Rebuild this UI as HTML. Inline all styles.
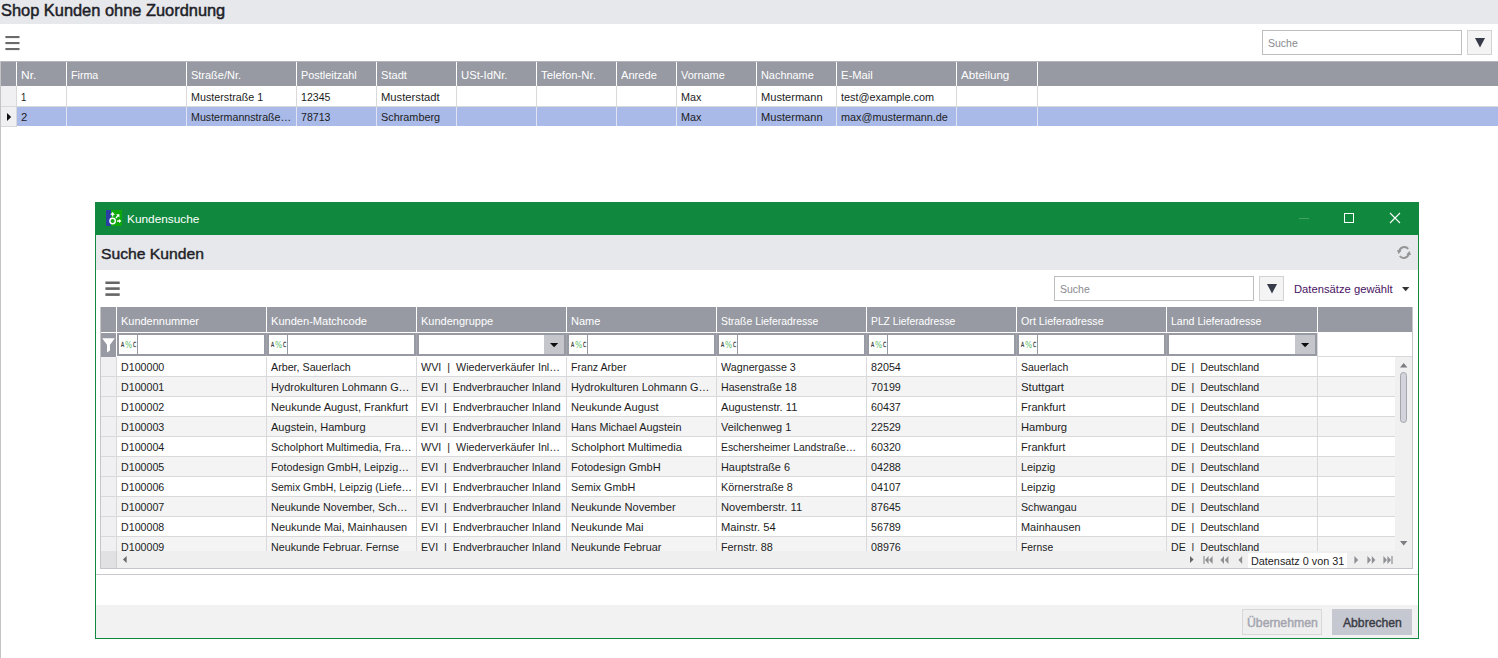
<!DOCTYPE html>
<html lang="de"><head><meta charset="utf-8"><title>Shop Kunden ohne Zuordnung</title>
<style>
html,body{margin:0;padding:0;background:#fff;}
body{width:1498px;height:658px;position:relative;overflow:hidden;font-family:"Liberation Sans", Arial, sans-serif;}
body div,body svg,body span{position:absolute;}
.t{white-space:pre;transform-origin:0 0;}
.clip{overflow:hidden;}
.mono{font-family:"DejaVu Sans",sans-serif;font-size:7px;line-height:12px;font-weight:400;color:#2a2a2a;transform-origin:0 0;transform:scaleX(.66);-webkit-text-stroke:.2px #2a2a2a;}
.pct{font-family:"DejaVu Sans",sans-serif;font-size:9px;line-height:12px;font-weight:400;color:#5cbc66;transform-origin:0 0;transform:scaleX(.84);}
</style></head><body>
<div style="left:0px;top:0px;width:1498px;height:24px;background:#e7e8ec;"></div>
<svg style="left:0;top:30px" width="30" height="26" viewBox="0 0 30 26" fill="#6a6a6a"><rect x="5.4" y="6" width="14.1" height="2.1"/><rect x="5.4" y="12" width="14.1" height="2.1"/><rect x="5.4" y="18" width="14.1" height="2.1"/></svg>
<div style="left:1262px;top:30px;width:200px;height:25px;background:#fff;border:1px solid #bdbdbd;box-sizing:border-box;"></div>
<div style="left:1467px;top:30px;width:25px;height:25px;background:#f4f4f5;border:1px solid #d2d2d4;box-sizing:border-box;"></div>
<svg style="left:1475px;top:38px" width="10" height="10" viewBox="0 0 10 10"><path d="M0 0H10L5 9.4Z" fill="#373a48"/></svg>
<div style="left:0px;top:61px;width:1px;height:597px;background:#c4c4c6;"></div>
<div style="left:1px;top:61px;width:1497px;height:25px;background:#979aa3;"></div>
<div style="left:1px;top:61px;width:1497px;height:1px;background:#b4b6bc;"></div>
<div style="left:16px;top:62px;width:1px;height:24px;background:#fff;"></div>
<div style="left:66px;top:62px;width:1px;height:24px;background:#fff;"></div>
<div style="left:186px;top:62px;width:1px;height:24px;background:#fff;"></div>
<div style="left:296px;top:62px;width:1px;height:24px;background:#fff;"></div>
<div style="left:376px;top:62px;width:1px;height:24px;background:#fff;"></div>
<div style="left:456px;top:62px;width:1px;height:24px;background:#fff;"></div>
<div style="left:536px;top:62px;width:1px;height:24px;background:#fff;"></div>
<div style="left:616px;top:62px;width:1px;height:24px;background:#fff;"></div>
<div style="left:676px;top:62px;width:1px;height:24px;background:#fff;"></div>
<div style="left:756px;top:62px;width:1px;height:24px;background:#fff;"></div>
<div style="left:836px;top:62px;width:1px;height:24px;background:#fff;"></div>
<div style="left:956px;top:62px;width:1px;height:24px;background:#fff;"></div>
<div style="left:1037px;top:62px;width:1px;height:24px;background:#fff;"></div>
<div style="left:1px;top:86px;width:15px;height:20px;background:#f0f0f2;"></div>
<div style="left:1px;top:106px;width:1497px;height:1px;background:#d9d9dc;"></div>
<div style="left:17px;top:107px;width:1481px;height:19px;background:#a9baE8;"></div>
<div style="left:1px;top:107px;width:15px;height:19px;background:#f0f0f2;"></div>
<div style="left:1px;top:126px;width:16px;height:1px;background:#d9d9dc;"></div>
<div style="left:16px;top:86px;width:1px;height:21px;background:#d9d9dc;"></div>
<div style="left:16px;top:107px;width:1px;height:19px;background:#d9d9dc;"></div>
<div style="left:66px;top:86px;width:1px;height:21px;background:#d9d9dc;"></div>
<div style="left:66px;top:107px;width:1px;height:19px;background:#dfe3f2;"></div>
<div style="left:186px;top:86px;width:1px;height:21px;background:#d9d9dc;"></div>
<div style="left:186px;top:107px;width:1px;height:19px;background:#dfe3f2;"></div>
<div style="left:296px;top:86px;width:1px;height:21px;background:#d9d9dc;"></div>
<div style="left:296px;top:107px;width:1px;height:19px;background:#dfe3f2;"></div>
<div style="left:376px;top:86px;width:1px;height:21px;background:#d9d9dc;"></div>
<div style="left:376px;top:107px;width:1px;height:19px;background:#dfe3f2;"></div>
<div style="left:456px;top:86px;width:1px;height:21px;background:#d9d9dc;"></div>
<div style="left:456px;top:107px;width:1px;height:19px;background:#dfe3f2;"></div>
<div style="left:536px;top:86px;width:1px;height:21px;background:#d9d9dc;"></div>
<div style="left:536px;top:107px;width:1px;height:19px;background:#dfe3f2;"></div>
<div style="left:616px;top:86px;width:1px;height:21px;background:#d9d9dc;"></div>
<div style="left:616px;top:107px;width:1px;height:19px;background:#dfe3f2;"></div>
<div style="left:676px;top:86px;width:1px;height:21px;background:#d9d9dc;"></div>
<div style="left:676px;top:107px;width:1px;height:19px;background:#dfe3f2;"></div>
<div style="left:756px;top:86px;width:1px;height:21px;background:#d9d9dc;"></div>
<div style="left:756px;top:107px;width:1px;height:19px;background:#dfe3f2;"></div>
<div style="left:836px;top:86px;width:1px;height:21px;background:#d9d9dc;"></div>
<div style="left:836px;top:107px;width:1px;height:19px;background:#dfe3f2;"></div>
<div style="left:956px;top:86px;width:1px;height:21px;background:#d9d9dc;"></div>
<div style="left:956px;top:107px;width:1px;height:19px;background:#dfe3f2;"></div>
<div style="left:1037px;top:86px;width:1px;height:21px;background:#d9d9dc;"></div>
<div style="left:1037px;top:107px;width:1px;height:19px;background:#dfe3f2;"></div>
<svg style="left:7px;top:113px" width="5" height="8" viewBox="0 0 5 8"><path d="M0 0L4.2 4L0 8Z" fill="#111"/></svg>
<div style="left:95px;top:202px;width:1324px;height:437px;background:#fff;border:1px solid #10893e;box-sizing:border-box;"></div>
<div style="left:95px;top:202px;width:1324px;height:33px;background:#10893e;"></div>
<div style="left:106px;top:210px;width:5px;height:16px;background:#2a3ea6;"></div>
<div style="left:111px;top:210px;width:11px;height:16px;background:#0ca80c;"></div>
<svg style="left:106px;top:210px" width="16" height="16" viewBox="0 0 16 16">
<circle cx="6.6" cy="11" r="2.7" fill="none" stroke="#fff" stroke-width="1.4"/>
<path d="M6.6 1.9L9 4.8H7.3V6.4H5.9V4.8H4.2Z" fill="#fff"/>
<path d="M10.1 4.2H13.4V7.4Z" fill="#fff"/><path d="M9.9 8L12.2 5.4" stroke="#fff" stroke-width="1.3" fill="none"/>
<path d="M11 10.3H13V9L15.4 11L13 13V11.7H11Z" fill="#fff"/></svg>
<div style="left:1299px;top:218px;width:10px;height:1px;background:#43a067;"></div>
<div style="left:1344px;top:213px;width:10px;height:10px;background:transparent;border:1px solid #fff;box-sizing:border-box;"></div>
<svg style="left:1389px;top:212px" width="12" height="12" viewBox="0 0 12 12"><path d="M1 1L11 11M11 1L1 11" stroke="#fff" stroke-width="1.1" fill="none"/></svg>
<div style="left:96px;top:235px;width:1322px;height:35px;background:#e7e8ec;"></div>
<svg style="left:1397px;top:245px" width="15" height="15" viewBox="0 0 15 15" fill="none" stroke="#949494" stroke-width="2">
<path d="M2.3 6.4A5 5 0 0 1 11.2 3.9"/><path d="M11.7 8.5A5 5 0 0 1 2.8 11"/>
<path d="M0 4.9L4.7 5.5L1.5 8.9Z" fill="#949494" stroke="none"/><path d="M14 10L9.3 9.4L12.5 6Z" fill="#949494" stroke="none"/></svg>
<svg style="left:100px;top:276px" width="30" height="26" viewBox="0 0 30 26" fill="#666"><rect x="5.4" y="5.5" width="14.3" height="2.5"/><rect x="5.4" y="11.3" width="14.3" height="2.6"/><rect x="5.4" y="17.3" width="14.3" height="2.6"/></svg>
<div style="left:1054px;top:276px;width:200px;height:25px;background:#fff;border:1px solid #bdbdbd;box-sizing:border-box;"></div>
<div style="left:1259px;top:276px;width:25px;height:25px;background:#f4f4f5;border:1px solid #d2d2d4;box-sizing:border-box;"></div>
<svg style="left:1266.5px;top:284px" width="10" height="10" viewBox="0 0 10 10"><path d="M0 0H10L5 9.4Z" fill="#373a48"/></svg>
<svg style="left:1401.5px;top:286.5px" width="8" height="5" viewBox="0 0 8 5"><path d="M0 0H7.4L3.7 4.2Z" fill="#333"/></svg>
<div style="left:100px;top:307px;width:1313px;height:262px;background:#fff;border:1px solid #c6c6ca;box-sizing:border-box;"></div>
<div style="left:101px;top:307px;width:1311px;height:25px;background:#979aa3;"></div>
<div style="left:116px;top:307px;width:1px;height:25px;background:#fff;"></div>
<div style="left:266px;top:307px;width:1px;height:25px;background:#fff;"></div>
<div style="left:416px;top:307px;width:1px;height:25px;background:#fff;"></div>
<div style="left:566px;top:307px;width:1px;height:25px;background:#fff;"></div>
<div style="left:716px;top:307px;width:1px;height:25px;background:#fff;"></div>
<div style="left:866px;top:307px;width:1px;height:25px;background:#fff;"></div>
<div style="left:1016px;top:307px;width:1px;height:25px;background:#fff;"></div>
<div style="left:1166px;top:307px;width:1px;height:25px;background:#fff;"></div>
<div style="left:1317px;top:307px;width:1px;height:25px;background:#fff;"></div>
<div style="left:101px;top:333px;width:15px;height:24px;background:#979aa3;"></div>
<svg style="left:102px;top:338px" width="13" height="15" viewBox="0 0 13 15"><path d="M0.2 0.3H12.8L8 6.8V12.4L5 14.6V6.8Z" fill="#fff"/></svg>
<div style="left:116px;top:333px;width:1px;height:24px;background:#fff;"></div>
<div style="left:117px;top:333px;width:149px;height:23px;background:#979aa3;"></div>
<div style="left:119px;top:335px;width:18px;height:19px;background:#fff;"></div>
<div style="left:137px;top:335px;width:1px;height:19px;background:#979aa3;"></div>
<div style="left:138px;top:335px;width:126px;height:19px;background:#fff;"></div>
<span class="mono" style="left:121px;top:338.6px;">A</span><span class="pct" style="left:125px;top:338.9px;">%</span><span class="mono" style="left:133px;top:338.6px;">C</span>
<div style="left:266px;top:333px;width:1px;height:23px;background:#a3a5ad;"></div>
<div style="left:267px;top:333px;width:149px;height:23px;background:#979aa3;"></div>
<div style="left:269px;top:335px;width:18px;height:19px;background:#fff;"></div>
<div style="left:287px;top:335px;width:1px;height:19px;background:#979aa3;"></div>
<div style="left:288px;top:335px;width:126px;height:19px;background:#fff;"></div>
<span class="mono" style="left:271px;top:338.6px;">A</span><span class="pct" style="left:275px;top:338.9px;">%</span><span class="mono" style="left:283px;top:338.6px;">C</span>
<div style="left:416px;top:333px;width:1px;height:23px;background:#a3a5ad;"></div>
<div style="left:417px;top:333px;width:149px;height:23px;background:#979aa3;"></div>
<div style="left:419px;top:335px;width:125px;height:19px;background:#fff;"></div>
<div style="left:544px;top:335px;width:20px;height:19px;background:#c5c6cc;"></div>
<svg style="left:550px;top:343px" width="9" height="5" viewBox="0 0 9 5"><path d="M0 0H8.2L4.1 4.2Z" fill="#0c0c0c"/></svg>
<div style="left:566px;top:333px;width:1px;height:23px;background:#a3a5ad;"></div>
<div style="left:567px;top:333px;width:149px;height:23px;background:#979aa3;"></div>
<div style="left:569px;top:335px;width:18px;height:19px;background:#fff;"></div>
<div style="left:587px;top:335px;width:1px;height:19px;background:#979aa3;"></div>
<div style="left:588px;top:335px;width:126px;height:19px;background:#fff;"></div>
<span class="mono" style="left:571px;top:338.6px;">A</span><span class="pct" style="left:575px;top:338.9px;">%</span><span class="mono" style="left:583px;top:338.6px;">C</span>
<div style="left:716px;top:333px;width:1px;height:23px;background:#a3a5ad;"></div>
<div style="left:717px;top:333px;width:149px;height:23px;background:#979aa3;"></div>
<div style="left:719px;top:335px;width:18px;height:19px;background:#fff;"></div>
<div style="left:737px;top:335px;width:1px;height:19px;background:#979aa3;"></div>
<div style="left:738px;top:335px;width:126px;height:19px;background:#fff;"></div>
<span class="mono" style="left:721px;top:338.6px;">A</span><span class="pct" style="left:725px;top:338.9px;">%</span><span class="mono" style="left:733px;top:338.6px;">C</span>
<div style="left:866px;top:333px;width:1px;height:23px;background:#a3a5ad;"></div>
<div style="left:867px;top:333px;width:149px;height:23px;background:#979aa3;"></div>
<div style="left:869px;top:335px;width:18px;height:19px;background:#fff;"></div>
<div style="left:887px;top:335px;width:1px;height:19px;background:#979aa3;"></div>
<div style="left:888px;top:335px;width:126px;height:19px;background:#fff;"></div>
<span class="mono" style="left:871px;top:338.6px;">A</span><span class="pct" style="left:875px;top:338.9px;">%</span><span class="mono" style="left:883px;top:338.6px;">C</span>
<div style="left:1016px;top:333px;width:1px;height:23px;background:#a3a5ad;"></div>
<div style="left:1017px;top:333px;width:149px;height:23px;background:#979aa3;"></div>
<div style="left:1019px;top:335px;width:18px;height:19px;background:#fff;"></div>
<div style="left:1037px;top:335px;width:1px;height:19px;background:#979aa3;"></div>
<div style="left:1038px;top:335px;width:126px;height:19px;background:#fff;"></div>
<span class="mono" style="left:1021px;top:338.6px;">A</span><span class="pct" style="left:1025px;top:338.9px;">%</span><span class="mono" style="left:1033px;top:338.6px;">C</span>
<div style="left:1166px;top:333px;width:1px;height:23px;background:#a3a5ad;"></div>
<div style="left:1167px;top:333px;width:150px;height:23px;background:#979aa3;"></div>
<div style="left:1169px;top:335px;width:126px;height:19px;background:#fff;"></div>
<div style="left:1295px;top:335px;width:20px;height:19px;background:#c5c6cc;"></div>
<svg style="left:1301px;top:343px" width="9" height="5" viewBox="0 0 9 5"><path d="M0 0H8.2L4.1 4.2Z" fill="#0c0c0c"/></svg>
<div style="left:1317px;top:356px;width:95px;height:1px;background:#d9d9dc;"></div>
<div style="left:1317px;top:333px;width:1px;height:23px;background:#d9d9dc;"></div>
<div style="left:1395px;top:357px;width:17px;height:194px;background:#f0f0f1;"></div>
<svg style="left:1400px;top:363px" width="8" height="5" viewBox="0 0 8 5"><path d="M0 4.4H7.4L3.7 0Z" fill="#7d7d80"/></svg>
<svg style="left:1400px;top:541px" width="8" height="5" viewBox="0 0 8 5"><path d="M0 0H7.4L3.7 4.4Z" fill="#7d7d80"/></svg>
<div style="left:1400px;top:372px;width:7px;height:51px;background:#d3d4db;border:1px solid #a4a5ad;box-sizing:border-box;border-radius:3.5px;"></div>
<div style="left:101px;top:551px;width:1311px;height:17px;background:#efeff0;"></div>
<div style="left:101px;top:551px;width:15px;height:17px;background:#e1e1e4;"></div>
<div style="left:116px;top:551px;width:1px;height:17px;background:#d0d0d3;"></div>
<svg style="left:122.9px;top:555.9px" width="4" height="7" viewBox="0 0 4 7"><path d="M3.6 0V7L0 3.5Z" fill="#666"/></svg>
<svg style="left:1190px;top:555.9px" width="4" height="7" viewBox="0 0 4 7"><path d="M0 0V7L3.6 3.5Z" fill="#666"/></svg>
<div style="left:1247.5px;top:552.5px;width:99.5px;height:15px;background:#fff;"></div>
<svg style="left:1203px;top:556px" width="10" height="8" viewBox="0 0 10 8" fill="#8f9094"><rect x="0.4" y="0" width="1.2" height="8"/><path d="M5.6 0V8L2 4ZM9.6 0V8L6 4Z"/></svg>
<svg style="left:1220px;top:556px" width="9" height="8" viewBox="0 0 9 8" fill="#8f9094"><path d="M4 0V8L0.4 4ZM8.4 0V8L4.8 4Z"/></svg>
<svg style="left:1237.5px;top:556px" width="5" height="8" viewBox="0 0 5 8" fill="#8f9094"><path d="M4.2 0V8L0.4 4Z"/></svg>
<svg style="left:1353.5px;top:556px" width="5" height="8" viewBox="0 0 5 8" fill="#8f9094"><path d="M0.4 0V8L4.2 4Z"/></svg>
<svg style="left:1367px;top:556px" width="9" height="8" viewBox="0 0 9 8" fill="#8f9094"><path d="M0.4 0V8L4 4ZM4.8 0V8L8.4 4Z"/></svg>
<svg style="left:1383px;top:556px" width="10" height="8" viewBox="0 0 10 8" fill="#8f9094"><path d="M0.4 0V8L4 4ZM4.4 0V8L8 4Z"/><rect x="8.4" y="0" width="1.2" height="8"/></svg>
<div style="left:96px;top:574px;width:1322px;height:1px;background:#c9cace;"></div>
<div style="left:96px;top:605px;width:1322px;height:33px;background:#f2f2f3;"></div>
<div style="left:1242px;top:609px;width:80px;height:26px;background:#eeeeef;border:1px solid #d8d8da;box-sizing:border-box;"></div>
<div style="left:1332px;top:609px;width:80px;height:26px;background:#c6c8d1;"></div>
<span class="t" style="left:1.40px;top:1.25px;font-size:16.6px;line-height:20px;font-weight:400;color:#1f1f29;transform:scaleX(0.9879);-webkit-text-stroke:0.5px #1f1f29;">Shop Kunden ohne Zuordnung</span>
<span class="t" style="left:1267.80px;top:36.96px;font-size:10.8px;line-height:13px;font-weight:400;color:#8a8a8e;transform:scaleX(0.9703);">Suche</span>
<span class="t" style="left:21.00px;top:68.76px;font-size:10.8px;line-height:13px;font-weight:400;color:#fff;transform:scaleX(1.1090);">Nr.</span>
<span class="t" style="left:71.10px;top:68.76px;font-size:10.8px;line-height:13px;font-weight:400;color:#fff;transform:scaleX(0.9897);">Firma</span>
<span class="t" style="left:190.70px;top:68.76px;font-size:10.8px;line-height:13px;font-weight:400;color:#fff;transform:scaleX(1.0163);">Straße/Nr.</span>
<span class="t" style="left:301.00px;top:68.76px;font-size:10.8px;line-height:13px;font-weight:400;color:#fff;transform:scaleX(1.0089);">Postleitzahl</span>
<span class="t" style="left:380.60px;top:68.76px;font-size:10.8px;line-height:13px;font-weight:400;color:#fff;transform:scaleX(1.0273);">Stadt</span>
<span class="t" style="left:460.80px;top:68.76px;font-size:10.8px;line-height:13px;font-weight:400;color:#fff;transform:scaleX(1.0474);">USt-IdNr.</span>
<span class="t" style="left:540.70px;top:68.76px;font-size:10.8px;line-height:13px;font-weight:400;color:#fff;transform:scaleX(1.0497);">Telefon-Nr.</span>
<span class="t" style="left:620.60px;top:68.76px;font-size:10.8px;line-height:13px;font-weight:400;color:#fff;transform:scaleX(1.0284);">Anrede</span>
<span class="t" style="left:681.10px;top:68.76px;font-size:10.8px;line-height:13px;font-weight:400;color:#fff;transform:scaleX(1.0114);">Vorname</span>
<span class="t" style="left:760.90px;top:68.76px;font-size:10.8px;line-height:13px;font-weight:400;color:#fff;transform:scaleX(1.0094);">Nachname</span>
<span class="t" style="left:841.00px;top:68.76px;font-size:10.8px;line-height:13px;font-weight:400;color:#fff;transform:scaleX(1.0366);">E-Mail</span>
<span class="t" style="left:960.60px;top:68.76px;font-size:10.8px;line-height:13px;font-weight:400;color:#fff;transform:scaleX(1.0729);">Abteilung</span>
<span class="t" style="left:21.40px;top:90.76px;font-size:10.8px;line-height:13px;font-weight:400;color:#1c1c1c;transform:scaleX(0.8833);">1</span>
<span class="t" style="left:191.30px;top:90.76px;font-size:10.8px;line-height:13px;font-weight:400;color:#1c1c1c;transform:scaleX(0.9946);">Musterstraße 1</span>
<span class="t" style="left:301.00px;top:90.76px;font-size:10.8px;line-height:13px;font-weight:400;color:#1c1c1c;transform:scaleX(0.9794);">12345</span>
<span class="t" style="left:380.90px;top:90.76px;font-size:10.8px;line-height:13px;font-weight:400;color:#1c1c1c;transform:scaleX(1.0389);">Musterstadt</span>
<span class="t" style="left:681.10px;top:90.76px;font-size:10.8px;line-height:13px;font-weight:400;color:#1c1c1c;transform:scaleX(1.0001);">Max</span>
<span class="t" style="left:761.30px;top:90.76px;font-size:10.8px;line-height:13px;font-weight:400;color:#1c1c1c;transform:scaleX(1.0267);">Mustermann</span>
<span class="t" style="left:841.00px;top:90.76px;font-size:10.8px;line-height:13px;font-weight:400;color:#1c1c1c;transform:scaleX(1.0057);">test@example.com</span>
<span class="t" style="left:20.80px;top:110.76px;font-size:10.8px;line-height:13px;font-weight:400;color:#1c1c1c;transform:scaleX(1.0500);">2</span>
<span class="t" style="left:191.30px;top:110.76px;font-size:10.8px;line-height:13px;font-weight:400;color:#1c1c1c;transform:scaleX(0.9880);">Mustermannstraße…</span>
<span class="t" style="left:301.00px;top:110.76px;font-size:10.8px;line-height:13px;font-weight:400;color:#1c1c1c;transform:scaleX(0.9794);">78713</span>
<span class="t" style="left:380.90px;top:110.76px;font-size:10.8px;line-height:13px;font-weight:400;color:#1c1c1c;transform:scaleX(1.0050);">Schramberg</span>
<span class="t" style="left:681.10px;top:110.76px;font-size:10.8px;line-height:13px;font-weight:400;color:#1c1c1c;transform:scaleX(1.0001);">Max</span>
<span class="t" style="left:761.30px;top:110.76px;font-size:10.8px;line-height:13px;font-weight:400;color:#1c1c1c;transform:scaleX(1.0267);">Mustermann</span>
<span class="t" style="left:841.00px;top:110.76px;font-size:10.8px;line-height:13px;font-weight:400;color:#1c1c1c;transform:scaleX(1.0050);">max@mustermann.de</span>
<span class="t" style="left:126.90px;top:211.91px;font-size:11.8px;line-height:14px;font-weight:400;color:#fff;transform:scaleX(1.0029);">Kundensuche</span>
<span class="t" style="left:101.20px;top:246.48px;font-size:14.5px;line-height:17px;font-weight:400;color:#1f1f29;transform:scaleX(1.0824);-webkit-text-stroke:0.4px #1f1f29;">Suche Kunden</span>
<span class="t" style="left:1059.80px;top:282.96px;font-size:10.8px;line-height:13px;font-weight:400;color:#8a8a8e;transform:scaleX(0.9703);">Suche</span>
<span class="t" style="left:1294.00px;top:282.76px;font-size:10.8px;line-height:13px;font-weight:400;color:#4a1262;transform:scaleX(1.0408);">Datensätze gewählt</span>
<span class="t" style="left:121.30px;top:314.76px;font-size:10.8px;line-height:13px;font-weight:400;color:#fff;transform:scaleX(1.0152);">Kundennummer</span>
<span class="t" style="left:271.00px;top:314.76px;font-size:10.8px;line-height:13px;font-weight:400;color:#fff;transform:scaleX(1.0253);">Kunden-Matchcode</span>
<span class="t" style="left:421.00px;top:314.76px;font-size:10.8px;line-height:13px;font-weight:400;color:#fff;transform:scaleX(1.0192);">Kundengruppe</span>
<span class="t" style="left:571.20px;top:314.76px;font-size:10.8px;line-height:13px;font-weight:400;color:#fff;transform:scaleX(1.0175);">Name</span>
<span class="t" style="left:720.60px;top:314.76px;font-size:10.8px;line-height:13px;font-weight:400;color:#fff;transform:scaleX(0.9641);">Straße Lieferadresse</span>
<span class="t" style="left:871.10px;top:314.76px;font-size:10.8px;line-height:13px;font-weight:400;color:#fff;transform:scaleX(0.9556);">PLZ Lieferadresse</span>
<span class="t" style="left:1021.00px;top:314.76px;font-size:10.8px;line-height:13px;font-weight:400;color:#fff;transform:scaleX(0.9903);">Ort Lieferadresse</span>
<span class="t" style="left:1171.00px;top:314.76px;font-size:10.8px;line-height:13px;font-weight:400;color:#fff;transform:scaleX(0.9780);">Land Lieferadresse</span>
<span class="t" style="left:1251.00px;top:554.96px;font-size:10.8px;line-height:13px;font-weight:400;color:#1c1c1c;transform:scaleX(1.0029);">Datensatz 0 von 31</span>
<span class="t" style="left:1246.70px;top:616.20px;font-size:12.4px;line-height:15px;font-weight:400;color:#a3a4ad;transform:scaleX(0.9883);-webkit-text-stroke:0.4px #a3a4ad;">Übernehmen</span>
<span class="t" style="left:1342.70px;top:616.20px;font-size:12.4px;line-height:15px;font-weight:400;color:#3a3b44;transform:scaleX(0.9810);-webkit-text-stroke:0.4px #3a3b44;">Abbrechen</span>
<div class="clip" style="left:0;top:357px;width:1498px;height:194px;">
<div style="left:101px;top:0px;width:15px;height:19px;background:#f0f0f2"></div>
<div style="left:101px;top:19px;width:1294px;height:1px;background:#d9d9dc"></div>
<div style="left:117px;top:20px;width:1278px;height:19px;background:#f4f4f5"></div>
<div style="left:101px;top:20px;width:15px;height:19px;background:#f0f0f2"></div>
<div style="left:101px;top:39px;width:1294px;height:1px;background:#d9d9dc"></div>
<div style="left:101px;top:40px;width:15px;height:19px;background:#f0f0f2"></div>
<div style="left:101px;top:59px;width:1294px;height:1px;background:#d9d9dc"></div>
<div style="left:117px;top:60px;width:1278px;height:19px;background:#f4f4f5"></div>
<div style="left:101px;top:60px;width:15px;height:19px;background:#f0f0f2"></div>
<div style="left:101px;top:79px;width:1294px;height:1px;background:#d9d9dc"></div>
<div style="left:101px;top:80px;width:15px;height:19px;background:#f0f0f2"></div>
<div style="left:101px;top:99px;width:1294px;height:1px;background:#d9d9dc"></div>
<div style="left:117px;top:100px;width:1278px;height:19px;background:#f4f4f5"></div>
<div style="left:101px;top:100px;width:15px;height:19px;background:#f0f0f2"></div>
<div style="left:101px;top:119px;width:1294px;height:1px;background:#d9d9dc"></div>
<div style="left:101px;top:120px;width:15px;height:19px;background:#f0f0f2"></div>
<div style="left:101px;top:139px;width:1294px;height:1px;background:#d9d9dc"></div>
<div style="left:117px;top:140px;width:1278px;height:19px;background:#f4f4f5"></div>
<div style="left:101px;top:140px;width:15px;height:19px;background:#f0f0f2"></div>
<div style="left:101px;top:159px;width:1294px;height:1px;background:#d9d9dc"></div>
<div style="left:101px;top:160px;width:15px;height:19px;background:#f0f0f2"></div>
<div style="left:101px;top:179px;width:1294px;height:1px;background:#d9d9dc"></div>
<div style="left:117px;top:180px;width:1278px;height:19px;background:#f4f4f5"></div>
<div style="left:101px;top:180px;width:15px;height:19px;background:#f0f0f2"></div>
<div style="left:101px;top:199px;width:1294px;height:1px;background:#d9d9dc"></div>
<div style="left:116px;top:0;width:1px;height:200px;background:#d9d9dc"></div>
<div style="left:266px;top:0;width:1px;height:200px;background:#d9d9dc"></div>
<div style="left:416px;top:0;width:1px;height:200px;background:#d9d9dc"></div>
<div style="left:566px;top:0;width:1px;height:200px;background:#d9d9dc"></div>
<div style="left:716px;top:0;width:1px;height:200px;background:#d9d9dc"></div>
<div style="left:866px;top:0;width:1px;height:200px;background:#d9d9dc"></div>
<div style="left:1016px;top:0;width:1px;height:200px;background:#d9d9dc"></div>
<div style="left:1166px;top:0;width:1px;height:200px;background:#d9d9dc"></div>
<div style="left:1317px;top:0;width:1px;height:200px;background:#d9d9dc"></div>
<span class="t" style="left:121.30px;top:3.76px;font-size:10.8px;line-height:13px;font-weight:400;color:#1c1c1c;transform:scaleX(0.9881);">D100000</span>
<span class="t" style="left:271.00px;top:3.76px;font-size:10.8px;line-height:13px;font-weight:400;color:#1c1c1c;transform:scaleX(0.9911);">Arber, Sauerlach</span>
<span class="t" style="left:421.00px;top:3.76px;font-size:10.8px;line-height:13px;font-weight:400;color:#1c1c1c;transform:scaleX(0.9957);">WVI  |  Wiederverkäufer Inl…</span>
<span class="t" style="left:571.20px;top:3.76px;font-size:10.8px;line-height:13px;font-weight:400;color:#1c1c1c;transform:scaleX(0.9825);">Franz Arber</span>
<span class="t" style="left:720.60px;top:3.76px;font-size:10.8px;line-height:13px;font-weight:400;color:#1c1c1c;transform:scaleX(0.9945);">Wagnergasse 3</span>
<span class="t" style="left:870.80px;top:3.76px;font-size:10.8px;line-height:13px;font-weight:400;color:#1c1c1c;transform:scaleX(0.9927);">82054</span>
<span class="t" style="left:1021.00px;top:3.76px;font-size:10.8px;line-height:13px;font-weight:400;color:#1c1c1c;transform:scaleX(0.9730);">Sauerlach</span>
<span class="t" style="left:1171.00px;top:3.76px;font-size:10.8px;line-height:13px;font-weight:400;color:#1c1c1c;transform:scaleX(0.9820);">DE  |  Deutschland</span>
<span class="t" style="left:121.30px;top:23.76px;font-size:10.8px;line-height:13px;font-weight:400;color:#1c1c1c;transform:scaleX(0.9881);">D100001</span>
<span class="t" style="left:271.00px;top:23.76px;font-size:10.8px;line-height:13px;font-weight:400;color:#1c1c1c;transform:scaleX(1.0078);">Hydrokulturen Lohmann G…</span>
<span class="t" style="left:421.00px;top:23.76px;font-size:10.8px;line-height:13px;font-weight:400;color:#1c1c1c;transform:scaleX(0.9877);">EVI  |  Endverbraucher Inland</span>
<span class="t" style="left:571.20px;top:23.76px;font-size:10.8px;line-height:13px;font-weight:400;color:#1c1c1c;transform:scaleX(1.0064);">Hydrokulturen Lohmann G…</span>
<span class="t" style="left:720.60px;top:23.76px;font-size:10.8px;line-height:13px;font-weight:400;color:#1c1c1c;transform:scaleX(0.9855);">Hasenstraße 18</span>
<span class="t" style="left:870.80px;top:23.76px;font-size:10.8px;line-height:13px;font-weight:400;color:#1c1c1c;transform:scaleX(0.9927);">70199</span>
<span class="t" style="left:1021.00px;top:23.76px;font-size:10.8px;line-height:13px;font-weight:400;color:#1c1c1c;transform:scaleX(1.0537);">Stuttgart</span>
<span class="t" style="left:1171.00px;top:23.76px;font-size:10.8px;line-height:13px;font-weight:400;color:#1c1c1c;transform:scaleX(0.9820);">DE  |  Deutschland</span>
<span class="t" style="left:121.30px;top:43.76px;font-size:10.8px;line-height:13px;font-weight:400;color:#1c1c1c;transform:scaleX(0.9881);">D100002</span>
<span class="t" style="left:271.00px;top:43.76px;font-size:10.8px;line-height:13px;font-weight:400;color:#1c1c1c;transform:scaleX(1.0197);">Neukunde August, Frankfurt</span>
<span class="t" style="left:421.00px;top:43.76px;font-size:10.8px;line-height:13px;font-weight:400;color:#1c1c1c;transform:scaleX(0.9877);">EVI  |  Endverbraucher Inland</span>
<span class="t" style="left:571.20px;top:43.76px;font-size:10.8px;line-height:13px;font-weight:400;color:#1c1c1c;transform:scaleX(1.0287);">Neukunde August</span>
<span class="t" style="left:720.60px;top:43.76px;font-size:10.8px;line-height:13px;font-weight:400;color:#1c1c1c;transform:scaleX(1.0280);">Augustenstr. 11</span>
<span class="t" style="left:870.80px;top:43.76px;font-size:10.8px;line-height:13px;font-weight:400;color:#1c1c1c;transform:scaleX(0.9927);">60437</span>
<span class="t" style="left:1021.00px;top:43.76px;font-size:10.8px;line-height:13px;font-weight:400;color:#1c1c1c;transform:scaleX(1.0232);">Frankfurt</span>
<span class="t" style="left:1171.00px;top:43.76px;font-size:10.8px;line-height:13px;font-weight:400;color:#1c1c1c;transform:scaleX(0.9820);">DE  |  Deutschland</span>
<span class="t" style="left:121.30px;top:63.76px;font-size:10.8px;line-height:13px;font-weight:400;color:#1c1c1c;transform:scaleX(0.9881);">D100003</span>
<span class="t" style="left:271.00px;top:63.76px;font-size:10.8px;line-height:13px;font-weight:400;color:#1c1c1c;transform:scaleX(1.0236);">Augstein, Hamburg</span>
<span class="t" style="left:421.00px;top:63.76px;font-size:10.8px;line-height:13px;font-weight:400;color:#1c1c1c;transform:scaleX(0.9877);">EVI  |  Endverbraucher Inland</span>
<span class="t" style="left:571.20px;top:63.76px;font-size:10.8px;line-height:13px;font-weight:400;color:#1c1c1c;transform:scaleX(1.0062);">Hans Michael Augstein</span>
<span class="t" style="left:720.60px;top:63.76px;font-size:10.8px;line-height:13px;font-weight:400;color:#1c1c1c;transform:scaleX(1.0082);">Veilchenweg 1</span>
<span class="t" style="left:870.80px;top:63.76px;font-size:10.8px;line-height:13px;font-weight:400;color:#1c1c1c;transform:scaleX(0.9927);">22529</span>
<span class="t" style="left:1021.00px;top:63.76px;font-size:10.8px;line-height:13px;font-weight:400;color:#1c1c1c;transform:scaleX(1.0383);">Hamburg</span>
<span class="t" style="left:1171.00px;top:63.76px;font-size:10.8px;line-height:13px;font-weight:400;color:#1c1c1c;transform:scaleX(0.9820);">DE  |  Deutschland</span>
<span class="t" style="left:121.30px;top:83.76px;font-size:10.8px;line-height:13px;font-weight:400;color:#1c1c1c;transform:scaleX(0.9881);">D100004</span>
<span class="t" style="left:271.00px;top:83.76px;font-size:10.8px;line-height:13px;font-weight:400;color:#1c1c1c;transform:scaleX(1.0064);">Scholphort Multimedia, Fra…</span>
<span class="t" style="left:421.00px;top:83.76px;font-size:10.8px;line-height:13px;font-weight:400;color:#1c1c1c;transform:scaleX(0.9957);">WVI  |  Wiederverkäufer Inl…</span>
<span class="t" style="left:571.20px;top:83.76px;font-size:10.8px;line-height:13px;font-weight:400;color:#1c1c1c;transform:scaleX(1.0401);">Scholphort Multimedia</span>
<span class="t" style="left:720.60px;top:83.76px;font-size:10.8px;line-height:13px;font-weight:400;color:#1c1c1c;transform:scaleX(0.9619);">Eschersheimer Landstraße…</span>
<span class="t" style="left:870.80px;top:83.76px;font-size:10.8px;line-height:13px;font-weight:400;color:#1c1c1c;transform:scaleX(0.9927);">60320</span>
<span class="t" style="left:1021.00px;top:83.76px;font-size:10.8px;line-height:13px;font-weight:400;color:#1c1c1c;transform:scaleX(1.0232);">Frankfurt</span>
<span class="t" style="left:1171.00px;top:83.76px;font-size:10.8px;line-height:13px;font-weight:400;color:#1c1c1c;transform:scaleX(0.9820);">DE  |  Deutschland</span>
<span class="t" style="left:121.30px;top:103.76px;font-size:10.8px;line-height:13px;font-weight:400;color:#1c1c1c;transform:scaleX(0.9881);">D100005</span>
<span class="t" style="left:271.00px;top:103.76px;font-size:10.8px;line-height:13px;font-weight:400;color:#1c1c1c;transform:scaleX(0.9947);">Fotodesign GmbH, Leipzig…</span>
<span class="t" style="left:421.00px;top:103.76px;font-size:10.8px;line-height:13px;font-weight:400;color:#1c1c1c;transform:scaleX(0.9877);">EVI  |  Endverbraucher Inland</span>
<span class="t" style="left:571.20px;top:103.76px;font-size:10.8px;line-height:13px;font-weight:400;color:#1c1c1c;transform:scaleX(1.0240);">Fotodesign GmbH</span>
<span class="t" style="left:720.60px;top:103.76px;font-size:10.8px;line-height:13px;font-weight:400;color:#1c1c1c;transform:scaleX(1.0086);">Hauptstraße 6</span>
<span class="t" style="left:870.80px;top:103.76px;font-size:10.8px;line-height:13px;font-weight:400;color:#1c1c1c;transform:scaleX(0.9927);">04288</span>
<span class="t" style="left:1021.00px;top:103.76px;font-size:10.8px;line-height:13px;font-weight:400;color:#1c1c1c;transform:scaleX(1.0056);">Leipzig</span>
<span class="t" style="left:1171.00px;top:103.76px;font-size:10.8px;line-height:13px;font-weight:400;color:#1c1c1c;transform:scaleX(0.9820);">DE  |  Deutschland</span>
<span class="t" style="left:121.30px;top:123.76px;font-size:10.8px;line-height:13px;font-weight:400;color:#1c1c1c;transform:scaleX(0.9881);">D100006</span>
<span class="t" style="left:271.00px;top:123.76px;font-size:10.8px;line-height:13px;font-weight:400;color:#1c1c1c;transform:scaleX(0.9708);">Semix GmbH, Leipzig (Liefe…</span>
<span class="t" style="left:421.00px;top:123.76px;font-size:10.8px;line-height:13px;font-weight:400;color:#1c1c1c;transform:scaleX(0.9877);">EVI  |  Endverbraucher Inland</span>
<span class="t" style="left:571.20px;top:123.76px;font-size:10.8px;line-height:13px;font-weight:400;color:#1c1c1c;transform:scaleX(1.0001);">Semix GmbH</span>
<span class="t" style="left:720.60px;top:123.76px;font-size:10.8px;line-height:13px;font-weight:400;color:#1c1c1c;transform:scaleX(0.9958);">Körnerstraße 8</span>
<span class="t" style="left:870.80px;top:123.76px;font-size:10.8px;line-height:13px;font-weight:400;color:#1c1c1c;transform:scaleX(0.9927);">04107</span>
<span class="t" style="left:1021.00px;top:123.76px;font-size:10.8px;line-height:13px;font-weight:400;color:#1c1c1c;transform:scaleX(1.0056);">Leipzig</span>
<span class="t" style="left:1171.00px;top:123.76px;font-size:10.8px;line-height:13px;font-weight:400;color:#1c1c1c;transform:scaleX(0.9820);">DE  |  Deutschland</span>
<span class="t" style="left:121.30px;top:143.76px;font-size:10.8px;line-height:13px;font-weight:400;color:#1c1c1c;transform:scaleX(0.9881);">D100007</span>
<span class="t" style="left:271.00px;top:143.76px;font-size:10.8px;line-height:13px;font-weight:400;color:#1c1c1c;transform:scaleX(0.9968);">Neukunde November, Sch…</span>
<span class="t" style="left:421.00px;top:143.76px;font-size:10.8px;line-height:13px;font-weight:400;color:#1c1c1c;transform:scaleX(0.9877);">EVI  |  Endverbraucher Inland</span>
<span class="t" style="left:571.20px;top:143.76px;font-size:10.8px;line-height:13px;font-weight:400;color:#1c1c1c;transform:scaleX(1.0251);">Neukunde November</span>
<span class="t" style="left:720.60px;top:143.76px;font-size:10.8px;line-height:13px;font-weight:400;color:#1c1c1c;transform:scaleX(1.0344);">Novemberstr. 11</span>
<span class="t" style="left:870.80px;top:143.76px;font-size:10.8px;line-height:13px;font-weight:400;color:#1c1c1c;transform:scaleX(0.9927);">87645</span>
<span class="t" style="left:1021.00px;top:143.76px;font-size:10.8px;line-height:13px;font-weight:400;color:#1c1c1c;transform:scaleX(0.9855);">Schwangau</span>
<span class="t" style="left:1171.00px;top:143.76px;font-size:10.8px;line-height:13px;font-weight:400;color:#1c1c1c;transform:scaleX(0.9820);">DE  |  Deutschland</span>
<span class="t" style="left:121.30px;top:163.76px;font-size:10.8px;line-height:13px;font-weight:400;color:#1c1c1c;transform:scaleX(0.9881);">D100008</span>
<span class="t" style="left:271.00px;top:163.76px;font-size:10.8px;line-height:13px;font-weight:400;color:#1c1c1c;transform:scaleX(1.0131);">Neukunde Mai, Mainhausen</span>
<span class="t" style="left:421.00px;top:163.76px;font-size:10.8px;line-height:13px;font-weight:400;color:#1c1c1c;transform:scaleX(0.9877);">EVI  |  Endverbraucher Inland</span>
<span class="t" style="left:571.20px;top:163.76px;font-size:10.8px;line-height:13px;font-weight:400;color:#1c1c1c;transform:scaleX(1.0430);">Neukunde Mai</span>
<span class="t" style="left:720.60px;top:163.76px;font-size:10.8px;line-height:13px;font-weight:400;color:#1c1c1c;transform:scaleX(1.0359);">Mainstr. 54</span>
<span class="t" style="left:870.80px;top:163.76px;font-size:10.8px;line-height:13px;font-weight:400;color:#1c1c1c;transform:scaleX(0.9927);">56789</span>
<span class="t" style="left:1021.00px;top:163.76px;font-size:10.8px;line-height:13px;font-weight:400;color:#1c1c1c;transform:scaleX(1.0133);">Mainhausen</span>
<span class="t" style="left:1171.00px;top:163.76px;font-size:10.8px;line-height:13px;font-weight:400;color:#1c1c1c;transform:scaleX(0.9820);">DE  |  Deutschland</span>
<span class="t" style="left:121.30px;top:183.76px;font-size:10.8px;line-height:13px;font-weight:400;color:#1c1c1c;transform:scaleX(0.9881);">D100009</span>
<span class="t" style="left:271.00px;top:183.76px;font-size:10.8px;line-height:13px;font-weight:400;color:#1c1c1c;transform:scaleX(0.9920);">Neukunde Februar, Fernse</span>
<span class="t" style="left:421.00px;top:183.76px;font-size:10.8px;line-height:13px;font-weight:400;color:#1c1c1c;transform:scaleX(0.9877);">EVI  |  Endverbraucher Inland</span>
<span class="t" style="left:571.20px;top:183.76px;font-size:10.8px;line-height:13px;font-weight:400;color:#1c1c1c;transform:scaleX(1.0030);">Neukunde Februar</span>
<span class="t" style="left:720.60px;top:183.76px;font-size:10.8px;line-height:13px;font-weight:400;color:#1c1c1c;transform:scaleX(1.0019);">Fernstr. 88</span>
<span class="t" style="left:870.80px;top:183.76px;font-size:10.8px;line-height:13px;font-weight:400;color:#1c1c1c;transform:scaleX(0.9927);">08976</span>
<span class="t" style="left:1021.00px;top:183.76px;font-size:10.8px;line-height:13px;font-weight:400;color:#1c1c1c;transform:scaleX(0.9584);">Fernse</span>
<span class="t" style="left:1171.00px;top:183.76px;font-size:10.8px;line-height:13px;font-weight:400;color:#1c1c1c;transform:scaleX(0.9820);">DE  |  Deutschland</span>
</div>
</body></html>
